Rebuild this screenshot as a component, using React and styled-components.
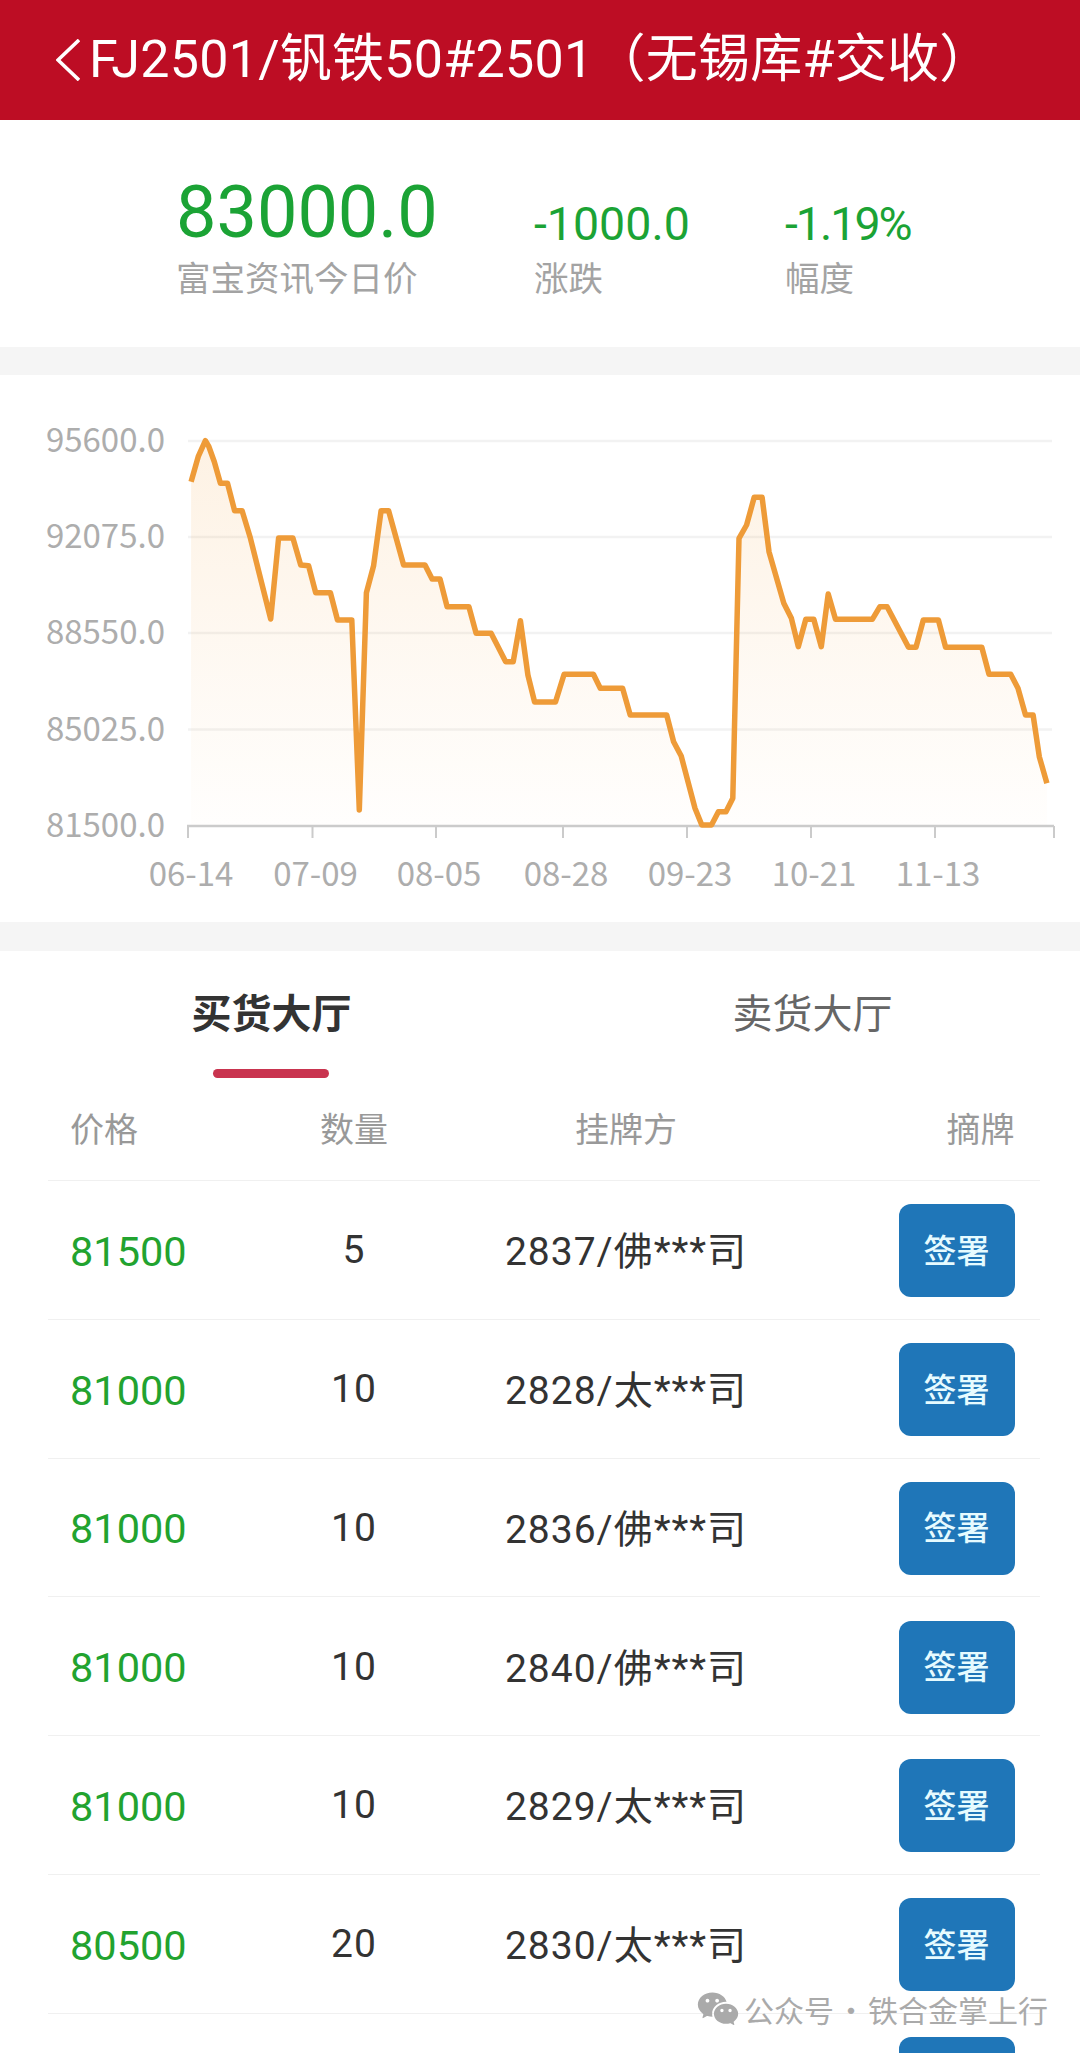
import styled, { createGlobalStyle } from "styled-components"
import { RiWechatFill } from "react-icons/ri"

const GlobalStyle = createGlobalStyle`
  html, body {
    margin: 0;
    padding: 0;
    background: #fff;
    font-family: "Noto Sans CJK SC", "Noto Sans", sans-serif;
  }
`

const Page = styled.div`
  position: relative;
  width: 1080px;
  height: 2053px;
  overflow: hidden;
  background: #fff;
`

const Header = styled.header`
  height: 120px;
  background: #bd0d24;
  color: #fff;
  display: flex;
  align-items: center;
  gap: 9px;
  padding-left: 56px;
`

const Title = styled.h1`
  margin: 0;
  font-family: Roboto, "Noto Sans CJK SC", sans-serif;
  font-size: 52px;
  font-weight: 400;
  line-height: 60px;
  letter-spacing: 0.25px;
  white-space: nowrap;
`

const Stats = styled.section`
  box-sizing: content-box;
  height: 167px;
  padding: 60px 0 0 176px;
  display: flex;
  align-items: flex-end;
  border-bottom: 28px solid #f5f5f5;
`

const Stat = styled.div`
  width: ${props => props.$width}px;
  padding-bottom: 47px;
  display: flex;
  flex-direction: column;
`

const StatValue = styled.div`
  font-family: Roboto, sans-serif;
  font-size: ${props => props.$big ? 72 : 46.5}px;
  line-height: ${props => props.$big ? 76 : 56}px;
  margin-bottom: ${props => props.$big ? 1 : 0}px;
  letter-spacing: ${props => props.$tight ? -2 : 0}px;
  color: #1ba335;
  white-space: nowrap;
`

const StatLabel = styled.div`
  font-size: 34.5px;
  line-height: 48px;
  color: #a3a3a3;
  white-space: nowrap;
`

const ChartSection = styled.section`
  border-bottom: 29px solid #f5f5f5;
`

const ChartSvg = styled.svg`
  display: block;
`

const AxisText = styled.text`
  font-family: "Noto Sans CJK SC", sans-serif;
  font-size: 33px;
  fill: #adadad;
`

const Tabs = styled.nav`
  display: flex;
  height: 130px;
  padding-left: 1px;
`

const Tab = styled.div`
  position: relative;
  flex: 0 0 541px;
  text-align: center;
  padding-top: 32px;
  font-size: 40px;
  line-height: 56px;
  font-weight: ${props => props.$active ? 700 : 400};
  color: ${props => props.$active ? "#333" : "#666"};

  ${props => props.$active && `
    &::after {
      content: "";
      position: absolute;
      left: 212px;
      top: 118px;
      width: 116px;
      height: 9px;
      border-radius: 5px;
      background: #c9344f;
    }
  `}
`

const Table = styled.div`
  margin: 0 40px 0 48px;
`

const Row = styled.div`
  display: grid;
  grid-template-columns: 160px 248px 296px 240.5px;
  align-items: center;
  padding: 0 25.5px 0 22px;
  box-sizing: border-box;
  height: ${props => props.$head ? 100 : 138.75}px;
  border-bottom: 1px solid #f0f0f0;
`

const HeadCell = styled.div`
  font-size: 34px;
  color: #999;
  text-align: ${props => props.$align || "left"};
  padding-bottom: 6px;
`

const Price = styled.div`
  font-family: Roboto, sans-serif;
  font-size: 41.5px;
  color: #22a32f;
  padding-top: 3px;
`

const Cell = styled.div`
  font-family: Roboto, "Noto Sans CJK SC", sans-serif;
  font-size: 39px;
  letter-spacing: 1px;
  color: #333;
  text-align: center;
  white-space: nowrap;
  padding-top: 1px;
`

const SellerCell = styled(Cell)`
  padding-top: 0;
  padding-bottom: 3px;
`

const SignButton = styled.button`
  justify-self: end;
  width: 116px;
  height: 93px;
  margin-top: 2px;
  border: 0;
  border-radius: 12px;
  padding: 0 0 4px;
  background: #1f76b8;
  color: #e6fbff;
  font-family: inherit;
  font-size: 33px;
  font-weight: 500;
`

const Watermark = styled.div`
  position: absolute;
  left: 696px;
  top: 1987px;
  display: flex;
  align-items: center;
  gap: 4px;
  color: #aaa;
  font-size: 30px;
  line-height: 44px;
  white-space: nowrap;
`

const Dot = styled.span`
  display: inline-block;
  width: 34px;
  text-align: center;
`

const yLabels = [
  ["95600.0", 441],
  ["92075.0", 537],
  ["88550.0", 633],
  ["85025.0", 729.5],
  ["81500.0", 826],
]

const xTicks = [188, 312.5, 436, 563, 687, 811, 935, 1054]
const xLabels = ["06-14", "07-09", "08-05", "08-28", "09-23", "10-21", "11-13"]

// traced from the left and right half of the chart
const leftTrace = [
  [535,245],[555,170],[575,122],[585,140],[600,185],[617,250],[637,250],[657,332],[678,332],[700,410],
  [758,657],[780,414],[820,414],[842,495],[864,497],[884,578],[925,578],[945,660],[985,660],[1006,1230],
  [1026,578],[1046,497],[1067,332],[1088,332],[1130,495],[1190,495],[1210,537],[1232,537],[1252,620],
  [1313,620],[1333,700],[1375,700],[1416,785],[1437,785],[1457,662],[1478,825],[1497,906],
]

const rightTrace = [
  [45,906],[70,823],[155,823],[175,865],[240,865],[262,945],[368,945],[388,1025],[410,1068],[450,1225],
  [470,1275],[498,1275],[518,1235],[540,1235],[560,1195],[578,415],[600,375],[622,292],[645,292],[665,455],
  [708,610],[730,655],[750,740],[772,658],[795,658],[817,740],[837,582],[858,658],[965,658],[987,620],
  [1008,620],[1070,742],[1092,742],[1113,660],[1157,660],[1178,742],[1283,742],[1304,823],[1367,823],
  [1388,865],[1410,945],[1432,945],[1450,1070],[1472,1150],
]

const points = [
  ...leftTrace.map(([x, y]) => [x / 2.8, 400 + y / 3]),
  ...rightTrace.map(([x, y]) => [540 + x / 2.904, 400 + y / 3]),
].map(([x, y]) => `${x.toFixed(1)},${y.toFixed(1)}`)

const linePoints = points.join(" ")
const areaPoints = `191,826 ${linePoints} 1047,826`

const orders = [
  { price: "81500", qty: "5", seller: "2837/佛***司" },
  { price: "81000", qty: "10", seller: "2828/太***司" },
  { price: "81000", qty: "10", seller: "2836/佛***司" },
  { price: "81000", qty: "10", seller: "2840/佛***司" },
  { price: "81000", qty: "10", seller: "2829/太***司" },
  { price: "80500", qty: "20", seller: "2830/太***司" },
]

const Chart = () => (
  <ChartSvg width="1080" height="547" viewBox="0 375 1080 547">
    <defs>
      <linearGradient id="areaFill" x1="0" y1="0" x2="0" y2="1">
        <stop offset="0" stopColor="#f4a13c" stopOpacity="0.14" />
        <stop offset="1" stopColor="#f4a13c" stopOpacity="0.01" />
      </linearGradient>
    </defs>

    {yLabels.slice(0, 4).map(([, y]) => (
      <line key={y} x1="188" x2="1052" y1={y} y2={y} stroke="#f2f2f2" strokeWidth="2.5" />
    ))}

    <polygon points={areaPoints} fill="url(#areaFill)" />

    <line x1="187" x2="1054" y1="826" y2="826" stroke="#cbcbcb" strokeWidth="2.5" />
    {xTicks.map(x => (
      <line key={x} x1={x} x2={x} y1="826" y2="838" stroke="#cbcbcb" strokeWidth="2" />
    ))}

    <polyline points={linePoints} fill="none" stroke="#ee9b38" strokeWidth="5.5" strokeLinejoin="round" />

    {yLabels.map(([label, y]) => (
      <AxisText key={label} x="165" y={y + 11} textAnchor="end">{label}</AxisText>
    ))}
    {xLabels.map((label, i) => (
      <AxisText key={label} x={xTicks[i] + 3} y="886" textAnchor="middle">{label}</AxisText>
    ))}
  </ChartSvg>
)

const App = () => {
  return (
    <Page>
      <GlobalStyle />

      <Header>
        <svg width="24" height="42" viewBox="0 0 24 42">
          <polyline points="23,1 2,21 23,41" fill="none" stroke="#fff" strokeWidth="3.6" />
        </svg>
        <Title>FJ2501/钒铁50#2501（无锡库#交收）</Title>
      </Header>

      <Stats>
        <Stat $width={358}>
          <StatValue $big>83000.0</StatValue>
          <StatLabel>富宝资讯今日价</StatLabel>
        </Stat>
        <Stat $width={251}>
          <StatValue>-1000.0</StatValue>
          <StatLabel>涨跌</StatLabel>
        </Stat>
        <Stat $width={200}>
          <StatValue $tight>-1.19%</StatValue>
          <StatLabel>幅度</StatLabel>
        </Stat>
      </Stats>

      <ChartSection>
        <Chart />
      </ChartSection>

      <Tabs>
        <Tab $active>买货大厅</Tab>
        <Tab>卖货大厅</Tab>
      </Tabs>

      <Table>
        <Row $head>
          <HeadCell>价格</HeadCell>
          <HeadCell $align="center">数量</HeadCell>
          <HeadCell $align="center">挂牌方</HeadCell>
          <HeadCell $align="right">摘牌</HeadCell>
        </Row>

        {orders.map(order => (
          <Row key={order.seller}>
            <Price>{order.price}</Price>
            <Cell>{order.qty}</Cell>
            <SellerCell>{order.seller}</SellerCell>
            <SignButton>签署</SignButton>
          </Row>
        ))}

        {/* next row is cut by the bottom of the screen, only its button shows */}
        <Row>
          <span />
          <span />
          <span />
          <SignButton />
        </Row>
      </Table>

      <Watermark>
        <RiWechatFill size={44} />
        <span>公众号<Dot>·</Dot>铁合金掌上行</span>
      </Watermark>
    </Page>
  )
}

export default App
